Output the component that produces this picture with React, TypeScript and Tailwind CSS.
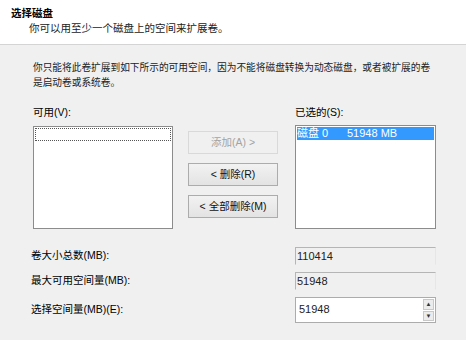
const font = {
  fontFamily: '"Liberation Sans", "Noto Sans CJK SC", sans-serif',
};

function Button({ label, disabled }: { label: string; disabled?: boolean }) {
  return (
    <button
      className={
        disabled
          ? "flex h-[23px] w-[90px] items-center justify-center border border-[#d9d9d9] bg-[#f0f0f0] text-[10.5px] text-[#a3a3a3]"
          : "flex h-[23px] w-[90px] items-center justify-center border border-[#acacac] bg-gradient-to-b from-[#f2f2f2] to-[#e3e3e3] text-[10.5px] text-[#111]"
      }
    >
      {label}
    </button>
  );
}

function ReadOnlyField({ value }: { value: string }) {
  return (
    <div className="flex h-[18px] w-[141px] items-center border-t border-l border-[#b5b5b5] border-r border-r-[#e6e6e6] border-b border-b-[#f0f0f0] bg-[#f0f0f0] pl-[1px] text-[11px] text-[#222]">
      {value}
    </div>
  );
}

export default function App() {
  return (
    <div style={font} className="h-[340px] w-[466px] overflow-hidden bg-[#f0f0f0] text-black">
      <div className="h-[45px] border-b border-[#d4d4d4] bg-white pl-[11px] pt-[5px]">
        <div className="text-[10.5px] leading-[16px] font-bold">选择磁盘</div>
        <div className="pl-[18px] text-[10.5px] leading-[15px] text-[#222]">
          你可以用至少一个磁盘上的空间来扩展卷。
        </div>
      </div>

      <div className="pl-[33px] pr-[10px]">
        <p className="mt-[15px] text-[9.7px] leading-[15px] whitespace-nowrap text-[#222]">
          你只能将此卷扩展到如下所示的可用空间，因为不能将磁盘转换为动态磁盘，或者被扩展的卷
          <br />
          是启动卷或系统卷。
        </p>

        <div className="mt-[15px] flex">
          <div className="flex w-[140px] flex-col">
            <div className="text-[10.5px] leading-[14px]">可用(V):</div>
            <div className="mt-[7px] h-[103px] border border-[#8c8c8c] bg-white p-[1px]">
              <div className="h-[13px] border border-dotted border-[#555]" />
            </div>
          </div>

          <div className="ml-[15px] flex flex-col gap-[9px] pt-[26px]">
            <Button label="添加(A) >" disabled />
            <Button label="< 删除(R)" />
            <Button label="< 全部删除(M)" />
          </div>

          <div className="ml-[17px] flex w-[141px] flex-col">
            <div className="text-[10.5px] leading-[14px]">已选的(S):</div>
            <div className="mt-[6px] h-[104px] border border-[#8c8c8c] bg-white p-[1px]">
              <div className="flex h-[13px] items-center bg-[#3399ff] text-[11px] leading-[13px] text-white">
                <span className="w-[50px]">磁盘 0</span>
                <span>51948 MB</span>
              </div>
            </div>
          </div>
        </div>

        <div className="mt-[18px] grid grid-cols-[262px_141px] items-center gap-y-[7px] text-[10.5px]">
          <div className="-ml-[2px]">卷大小总数(MB):</div>
          <ReadOnlyField value="110414" />
          <div className="-ml-[2px]">最大可用空间量(MB):</div>
          <ReadOnlyField value="51948" />
          <div className="-ml-[2px]">选择空间量(MB)(E):</div>
          <div className="flex h-[26px] w-[141px] border border-[#acacac] bg-white">
            <div className="flex-1 pl-[3px] pt-[3px] text-[11px] text-[#222]">51948</div>
            <div className="flex w-[13px] flex-col gap-[1px] p-[1px]">
              <div className="flex flex-1 items-center justify-center border border-[#c8c8c8] bg-[#ececec] text-[6px] leading-none text-[#333]">
                ▲
              </div>
              <div className="flex flex-1 items-center justify-center border border-[#c8c8c8] bg-[#ececec] text-[6px] leading-none text-[#333]">
                ▼
              </div>
            </div>
          </div>
        </div>
      </div>
    </div>
  );
}
